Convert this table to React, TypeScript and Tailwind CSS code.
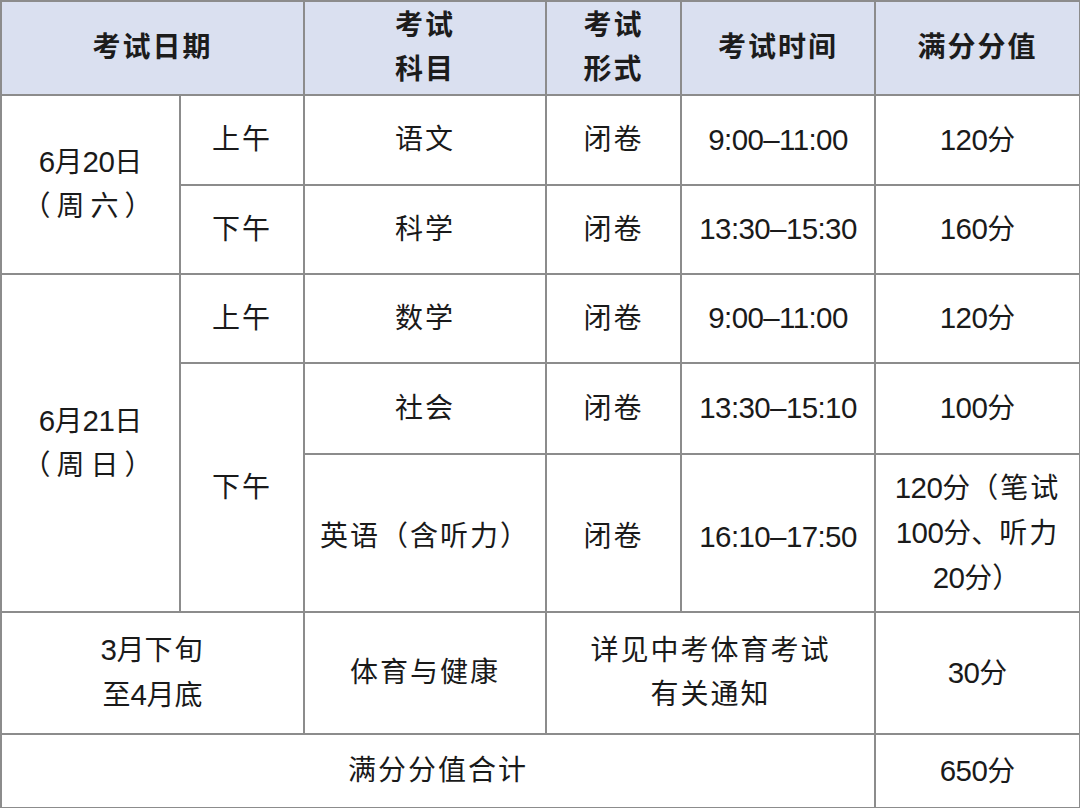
import type { ReactNode } from 'react'

const line = 'border-2 border-[#8c8c8c]'

function Cell({
  children,
  colSpan,
  rowSpan,
  wide,
  className,
}: {
  children: ReactNode
  colSpan?: number
  rowSpan?: number
  wide?: boolean
  className?: string
}) {
  return (
    <td
      colSpan={colSpan}
      rowSpan={rowSpan}
      className={`${line} p-0 text-center align-middle ${wide ? 'tracking-[2px]' : ''} ${className ?? ''}`}
    >
      {children}
    </td>
  )
}

function Head({ children, colSpan }: { children: ReactNode; colSpan?: number }) {
  return (
    <th colSpan={colSpan} className={`${line} bg-[#dae0f0] p-0 text-center align-middle font-bold tracking-[2px] text-[#1c1c1c]`}>
      {children}
    </th>
  )
}

// digits in the sheet are a slightly taller, tight sans
function Num({ children }: { children: ReactNode }) {
  return <span className="text-[29.5px] tracking-[-0.6px]">{children}</span>
}

const rows = [
  { time: '9:00–11:00', score: '120' },
  { time: '13:30–15:30', score: '160' },
  { time: '9:00–11:00', score: '120' },
  { time: '13:30–15:10', score: '100' },
  { time: '16:10–17:50', score: '120' },
]

export default function App() {
  return (
    <div className="h-[808px] w-[1080px] overflow-hidden bg-white">
      <table
        className="w-[1079px] table-fixed border-collapse text-[28px] leading-[44px] text-[#1a1a1a]"
        style={{ fontFamily: '"Liberation Sans", "Noto Sans CJK SC", sans-serif' }}
      >
        <colgroup>
          <col className="w-[179px]" />
          <col className="w-[124px]" />
          <col className="w-[242px]" />
          <col className="w-[135px]" />
          <col className="w-[194px]" />
          <col className="w-[205px]" />
        </colgroup>
        <tbody>
          <tr className="h-[94px]">
            <Head colSpan={2}>考试日期</Head>
            <Head>
              考试
              <br />
              科目
            </Head>
            <Head>
              考试
              <br />
              形式
            </Head>
            <Head>考试时间</Head>
            <Head>满分分值</Head>
          </tr>
          <tr className="h-[90px]">
            <Cell rowSpan={2}>
              <Num>6</Num>月<Num>20</Num>日
              <br />
              <span className="tracking-[6px]">（周六）</span>
            </Cell>
            <Cell wide>上午</Cell>
            <Cell wide>语文</Cell>
            <Cell wide>闭卷</Cell>
            <Cell>
              <Num>{rows[0].time}</Num>
            </Cell>
            <Cell>
              <Num>{rows[0].score}</Num>分
            </Cell>
          </tr>
          <tr className="h-[89px]">
            <Cell wide>下午</Cell>
            <Cell wide>科学</Cell>
            <Cell wide>闭卷</Cell>
            <Cell>
              <Num>{rows[1].time}</Num>
            </Cell>
            <Cell>
              <Num>{rows[1].score}</Num>分
            </Cell>
          </tr>
          <tr className="h-[89px]">
            <Cell rowSpan={3}>
              <Num>6</Num>月<Num>21</Num>日
              <br />
              <span className="tracking-[6px]">（周日）</span>
            </Cell>
            <Cell wide>上午</Cell>
            <Cell wide>数学</Cell>
            <Cell wide>闭卷</Cell>
            <Cell>
              <Num>{rows[2].time}</Num>
            </Cell>
            <Cell>
              <Num>{rows[2].score}</Num>分
            </Cell>
          </tr>
          <tr className="h-[91px]">
            <Cell rowSpan={2} wide>
              下午
            </Cell>
            <Cell wide>社会</Cell>
            <Cell wide>闭卷</Cell>
            <Cell>
              <Num>{rows[3].time}</Num>
            </Cell>
            <Cell>
              <Num>{rows[3].score}</Num>分
            </Cell>
          </tr>
          <tr className="h-[158px]">
            <Cell wide className="pt-[8px]">
              英语（含听力）
            </Cell>
            <Cell wide className="pt-[8px]">
              闭卷
            </Cell>
            <Cell className="pt-[8px]">
              <Num>{rows[4].time}</Num>
            </Cell>
            <Cell>
              <Num>{rows[4].score}</Num>分<span className="tracking-[2px]">（笔试</span>
              <br />
              <Num>100</Num>分、<span className="tracking-[2px]">听力</span>
              <br />
              <Num>20</Num>分<span className="tracking-[2px]">）</span>
            </Cell>
          </tr>
          <tr className="h-[122px]">
            <Cell colSpan={2}>
              <Num>3</Num>月<span className="tracking-[2px]">下旬</span>
              <br />至<Num>4</Num>月底
            </Cell>
            <Cell wide>体育与健康</Cell>
            <Cell colSpan={2} wide>
              详见中考体育考试
              <br />
              有关通知
            </Cell>
            <Cell>
              <Num>30</Num>分
            </Cell>
          </tr>
          <tr className="h-[74px]">
            <Cell colSpan={5} wide>
              满分分值合计
            </Cell>
            <Cell>
              <Num>650</Num>分
            </Cell>
          </tr>
        </tbody>
      </table>
    </div>
  )
}
